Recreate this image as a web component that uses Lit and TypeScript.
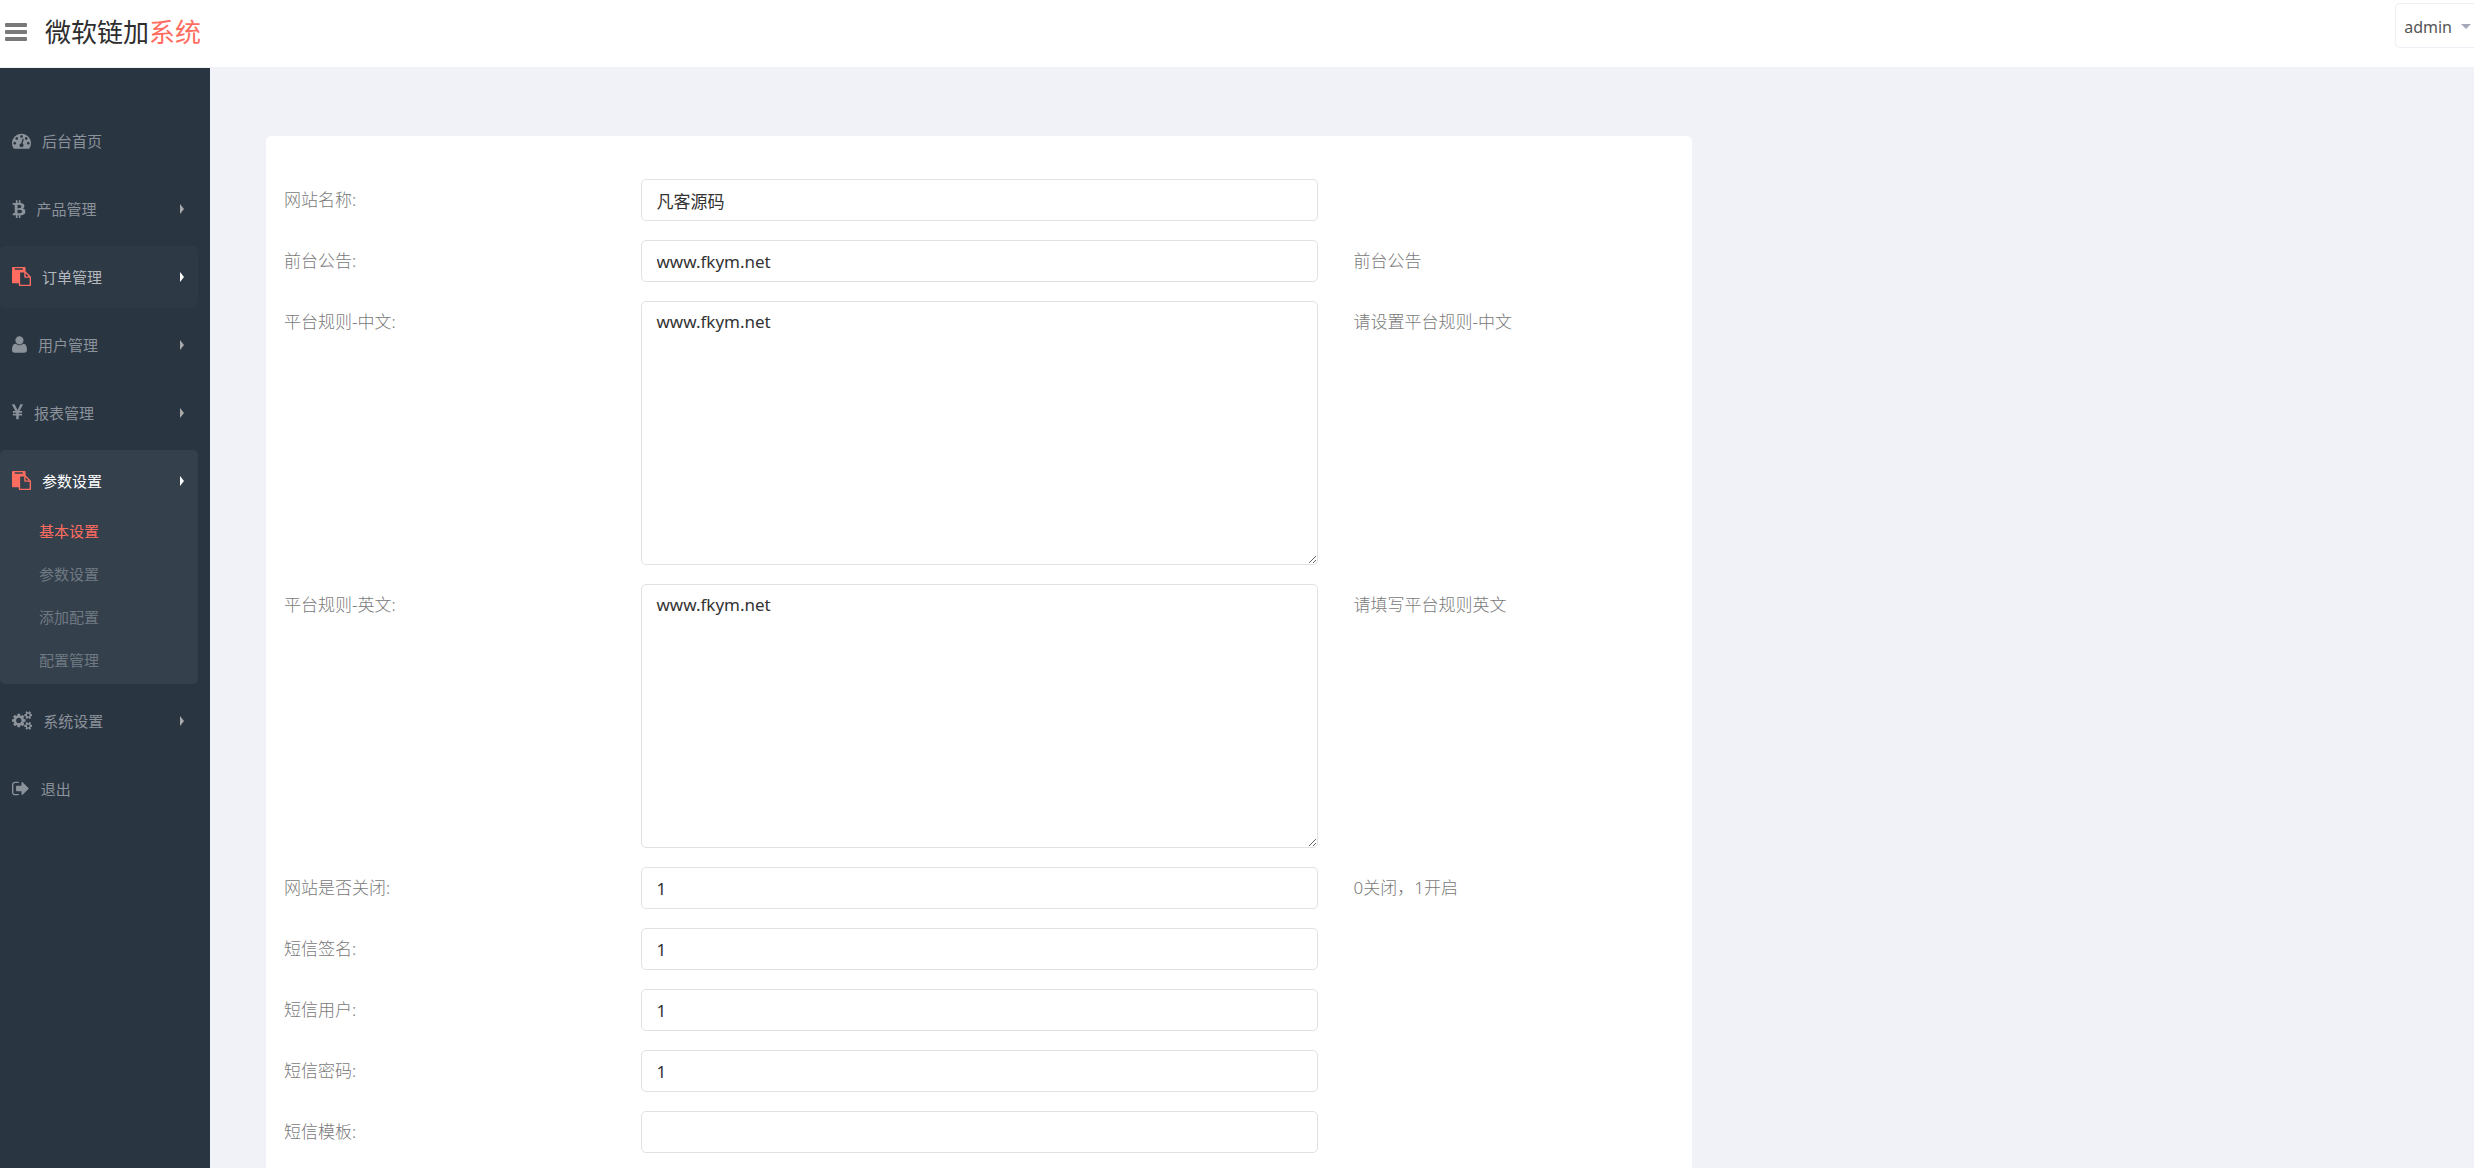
import { LitElement, html, css, svg, nothing } from "lit";
import { customElement } from "lit/decorators.js";
import { classMap } from "lit/directives/class-map.js";

interface Glyph {
  width: number;
  path: string;
}

interface MenuItem {
  label: string;
  icon: string;
  arrow?: boolean;
  state?: "hover" | "active";
  children?: { label: string; current?: boolean }[];
}

interface Field {
  id: string;
  label: string;
  value: string;
  hint?: string;
  multiline?: boolean;
}

/* Glyph outlines on a 1792-unit em, y axis pointing up, baseline at 1536. */
const GLYPHS: Record<string, Glyph> = {
  dashboard: {
    width: 1792,
    path: "M384 384q0 53 -37.5 90.5t-90.5 37.5t-90.5 -37.5t-37.5 -90.5t37.5 -90.5t90.5 -37.5t90.5 37.5t37.5 90.5zM576 832q0 53 -37.5 90.5t-90.5 37.5t-90.5 -37.5t-37.5 -90.5t37.5 -90.5t90.5 -37.5t90.5 37.5t37.5 90.5zM1004 351l101 382q6 26 -7.5 48.5t-38.5 29.5t-48 -6.5t-30 -39.5l-101 -382q-60 -5 -107 -43.5t-63 -98.5q-20 -77 20 -146t117 -89t146 20t89 117q16 60 -6 117t-72 91zM1664 384q0 53 -37.5 90.5t-90.5 37.5t-90.5 -37.5t-37.5 -90.5t37.5 -90.5t90.5 -37.5t90.5 37.5t37.5 90.5zM1024 1024q0 53 -37.5 90.5t-90.5 37.5t-90.5 -37.5t-37.5 -90.5t37.5 -90.5t90.5 -37.5t90.5 37.5t37.5 90.5zM1472 832q0 53 -37.5 90.5t-90.5 37.5t-90.5 -37.5t-37.5 -90.5t37.5 -90.5t90.5 -37.5t90.5 37.5t37.5 90.5zM1792 384q0 -261 -141 -483q-19 -29 -54 -29h-1402q-35 0 -54 29q-141 221 -141 483q0 182 71 348t191 286t286 191t348 71t348 -71t286 -191t191 -286t71 -348z",
  },
  bitcoin: {
    width: 1280,
    path: "M1167 896q18 -182 -131 -258q117 -28 175 -103t45 -214q-7 -71 -32.5 -125t-64.5 -89t-97 -58.5t-121.5 -34.5t-145.5 -15v-255h-154v251q-80 0 -122 1v-252h-154v255q-18 0 -54 0.5t-55 0.5h-200l31 183h111q50 0 58 51v402h16q-6 1 -16 1v287q-13 68 -89 68h-111v164l212 -1q64 0 97 1v252h154v-247q82 2 122 2v245h154v-252q79 -7 140 -22.5t113 -45t82.5 -78t36.5 -114.5zM952 351q0 36 -15 64t-37 46t-57.5 30.5t-65.5 18.5t-74 9t-69 3t-64.5 -1t-47.5 -1v-338q8 0 37 -0.5t48 -0.5t53 1.5t58.5 4t57 8.5t55.5 14t47.5 21t39.5 30t24.5 40t9.5 51zM881 827q0 33 -12.5 58.5t-30.5 42t-48 28t-55 16.5t-61.5 8t-58 2.5t-54 -1t-39.5 -0.5v-307q5 0 34.5 -0.5t46.5 0t50 2t55 5.5t51.5 11t48.5 18.5t37 27t27 38.5t9 51z",
  },
  paste: {
    width: 1792,
    path: "M768 -128h896v640h-416q-40 0 -68 28t-28 68v416h-384v-1152zM1024 1312v64q0 13 -9.5 22.5t-22.5 9.5h-704q-13 0 -22.5 -9.5t-9.5 -22.5v-64q0 -13 9.5 -22.5t22.5 -9.5h704q13 0 22.5 9.5t9.5 22.5zM1280 640h299l-299 299v-299zM1792 512v-672q0 -40 -28 -68t-68 -28h-960q-40 0 -68 28t-28 68v160h-544q-40 0 -68 28t-28 68v1344q0 40 28 68t68 28h1088q40 0 68 -28t28 -68v-328q21 -13 36 -28l408 -408q28 -28 48 -76t20 -88z",
  },
  user: {
    width: 1408,
    path: "M1408 131q0 -120 -73 -189.5t-194 -69.5h-874q-121 0 -194 69.5t-73 189.5q0 53 3.5 103.5t14 109t26.5 108.5t43 97.5t62 81t85.5 53.5t111.5 20q9 0 42 -21.5t74.5 -48t108 -48t133.5 -21.5t133.5 21.5t108 48t74.5 48t42 21.5q61 0 111.5 -20t85.5 -53.5t62 -81t43 -97.5t26.5 -108.5t14 -109t3.5 -103.5zM1088 1024q0 -159 -112.5 -271.5t-271.5 -112.5t-271.5 112.5t-112.5 271.5t112.5 271.5t271.5 112.5t271.5 -112.5t112.5 -271.5z",
  },
  yen: {
    width: 1027,
    path: "M603 0h-172q-13 0 -22.5 9t-9.5 23v330h-288q-13 0 -22.5 9t-9.5 23v103q0 13 9.5 22.5t22.5 9.5h288v85h-288q-13 0 -22.5 9t-9.5 23v104q0 13 9.5 22.5t22.5 9.5h214l-321 578q-8 16 0 32q10 16 28 16h194q19 0 29 -18l215 -425q19 -38 56 -125q10 24 30.5 68t27.5 61l191 420q8 19 29 19h191q17 0 27 -16q9 -14 1 -31l-313 -579h215q13 0 22.5 -9.5t9.5 -22.5v-104q0 -14 -9.5 -23t-22.5 -9h-290v-85h290q13 0 22.5 -9.5t9.5 -22.5v-103q0 -14 -9.5 -23t-22.5 -9h-290v-330q0 -13 -9.5 -22.5t-22.5 -9.5z",
  },
  cogs: {
    width: 1920,
    path: "M896 640q0 106 -75 181t-181 75t-181 -75t-75 -181t75 -181t181 -75t181 75t75 181zM1664 128q0 52 -38 90t-90 38t-90 -38t-38 -90q0 -53 37.5 -90.5t90.5 -37.5t90.5 37.5t37.5 90.5zM1664 1152q0 52 -38 90t-90 38t-90 -38t-38 -90q0 -53 37.5 -90.5t90.5 -37.5t90.5 37.5t37.5 90.5zM1280 731v-185q0 -10 -7 -19.5t-16 -10.5l-155 -24q-11 -35 -32 -76q34 -48 90 -115q7 -11 7 -20q0 -12 -7 -19q-23 -30 -82.5 -89.5t-78.5 -59.5q-11 0 -21 7l-115 90q-37 -19 -77 -31q-11 -108 -23 -155q-7 -24 -30 -24h-186q-11 0 -20 7.5t-10 17.5l-23 153q-34 10 -75 31l-118 -89q-7 -7 -20 -7q-11 0 -21 8q-144 133 -144 160q0 9 7 19q10 14 41 53t47 61q-23 44 -35 82l-152 24q-10 1 -17 9.5t-7 19.5v185q0 10 7 19.5t16 10.5l155 24q11 35 32 76q-34 48 -90 115q-7 11 -7 20q0 12 7 20q22 30 82 89t79 59q11 0 21 -7l115 -90q34 18 77 32q11 108 23 154q7 24 30 24h186q11 0 20 -7.5t10 -17.5l23 -153q34 -10 75 -31l118 89q8 7 20 7q11 0 21 -8q144 -133 144 -160q0 -8 -7 -19q-12 -16 -42 -54t-45 -60q23 -48 34 -82l152 -23q10 -2 17 -10.5t7 -19.5zM1920 198v-140q0 -16 -149 -31q-12 -27 -30 -52q51 -113 51 -138q0 -4 -4 -7q-122 -71 -124 -71q-8 0 -46 47t-52 68q-20 -2 -30 -2t-30 2q-14 -21 -52 -68t-46 -47q-2 0 -124 71q-4 3 -4 7q0 25 51 138q-18 25 -30 52q-149 15 -149 31v140q0 16 149 31q13 29 30 52q-51 113 -51 138q0 4 4 7q4 2 35 20t59 34t30 16q8 0 46 -46.5t52 -67.5q20 2 30 2t30 -2q51 71 92 112l6 2q4 0 124 -70q4 -3 4 -7q0 -25 -51 -138q17 -23 30 -52q149 -15 149 -31zM1920 1222v-140q0 -16 -149 -31q-12 -27 -30 -52q51 -113 51 -138q0 -4 -4 -7q-122 -71 -124 -71q-8 0 -46 47t-52 68q-20 -2 -30 -2t-30 2q-14 -21 -52 -68t-46 -47q-2 0 -124 71q-4 3 -4 7q0 25 51 138q-18 25 -30 52q-149 15 -149 31v140q0 16 149 31q13 29 30 52q-51 113 -51 138q0 4 4 7q4 2 35 20t59 34t30 16q8 0 46 -46.5t52 -67.5q20 2 30 2t30 -2q51 71 92 112l6 2q4 0 124 -70q4 -3 4 -7q0 -25 -51 -138q17 -23 30 -52q149 -15 149 -31z",
  },
  signout: {
    width: 1664,
    path: "M640 96q0 -4 1 -20t0.5 -26.5t-3 -23.5t-10 -19.5t-20.5 -6.5h-320q-119 0 -203.5 84.5t-84.5 203.5v704q0 119 84.5 203.5t203.5 84.5h320q13 0 22.5 -9.5t9.5 -22.5q0 -4 1 -20t0.5 -26.5t-3 -23.5t-10 -19.5t-20.5 -6.5h-320q-66 0 -113 -47t-47 -113v-704q0 -66 47 -113t113 -47h288h11h13t11.5 -1t11.5 -3t8 -5.5t7 -9t2 -13.5zM1568 640q0 -26 -19 -45l-544 -544q-19 -19 -45 -19t-45 19t-19 45v288h-448q-26 0 -45 19t-19 45v384q0 26 19 45t45 19h448v288q0 26 19 45t45 19t45 -19l544 -544q19 -19 19 -45z",
  },
};

const MENU: MenuItem[] = [
  { label: "后台首页", icon: "dashboard" },
  { label: "产品管理", icon: "bitcoin", arrow: true },
  { label: "订单管理", icon: "paste", arrow: true, state: "hover" },
  { label: "用户管理", icon: "user", arrow: true },
  { label: "报表管理", icon: "yen", arrow: true },
  {
    label: "参数设置",
    icon: "paste",
    arrow: true,
    state: "active",
    children: [
      { label: "基本设置", current: true },
      { label: "参数设置" },
      { label: "添加配置" },
      { label: "配置管理" },
    ],
  },
  { label: "系统设置", icon: "cogs", arrow: true },
  { label: "退出", icon: "signout" },
];

const FIELDS: Field[] = [
  { id: "site-name", label: "网站名称:", value: "凡客源码" },
  { id: "notice", label: "前台公告:", value: "www.fkym.net", hint: "前台公告" },
  { id: "rules-zh", label: "平台规则-中文:", value: "www.fkym.net", hint: "请设置平台规则-中文", multiline: true },
  { id: "rules-en", label: "平台规则-英文:", value: "www.fkym.net", hint: "请填写平台规则英文", multiline: true },
  { id: "closed", label: "网站是否关闭:", value: "1", hint: "0关闭，1开启" },
  { id: "sms-sign", label: "短信签名:", value: "1" },
  { id: "sms-user", label: "短信用户:", value: "1" },
  { id: "sms-pass", label: "短信密码:", value: "1" },
  { id: "sms-template", label: "短信模板:", value: "" },
];

@customElement("side-menu")
export class SideMenu extends LitElement {
  static styles = css`
    :host {
      display: block;
      background: #2a3542;
      padding: 42px 12px 0 0;
      font-size: 15px;
      line-height: 20px;
    }
    ul {
      list-style: none;
      margin: 0;
      padding: 0;
    }
    .menu {
      display: grid;
      gap: 6px;
    }
    .entry {
      border-radius: 5px;
      color: #8b929a;
    }
    .hover {
      background: #2d3945;
      color: #b4b8bd;
    }
    .active {
      background: #35404d;
      color: #fff;
    }
    a {
      color: inherit;
      text-decoration: none;
    }
    .row {
      display: flex;
      align-items: center;
      gap: 11px;
      padding: 21px 14px 21px 12px;
    }
    .icon {
      flex: none;
      height: 19px;
      margin-bottom: 1px;
      fill: currentColor;
    }
    .hover .icon,
    .active .icon {
      fill: #ff6c60;
    }
    .name {
      flex: 1;
    }
    .arrow {
      border: 5px solid transparent;
      border-left: 4px solid #a9a9a9;
      border-right: 0;
    }
    .hover .arrow,
    .active .arrow {
      border-left-color: #fff;
    }
    .sub {
      margin-top: -2px;
      padding-bottom: 2px;
    }
    .sub a {
      display: block;
      padding: 11px 0 12px 39px;
      color: #6f7982;
    }
    .sub .current {
      color: #ff6c60;
    }
  `;

  private icon(name: string) {
    const g = GLYPHS[name];
    return html`<svg class="icon" viewBox="0 0 ${g.width} 1792" aria-hidden="true">
      ${svg`<path transform="translate(0 1536) scale(1 -1)" d=${g.path}></path>`}
    </svg>`;
  }

  render() {
    return html`<nav>
      <ul class="menu">
        ${MENU.map(
          (item) => html`<li
            class=${classMap({ entry: true, hover: item.state === "hover", active: item.state === "active" })}
          >
            <a class="row" href="#">
              ${this.icon(item.icon)}
              <span class="name">${item.label}</span>
              ${item.arrow ? html`<span class="arrow"></span>` : nothing}
            </a>
            ${item.children
              ? html`<ul class="sub">
                  ${item.children.map(
                    (c) => html`<li><a href="#" class=${classMap({ current: !!c.current })}>${c.label}</a></li>`
                  )}
                </ul>`
              : nothing}
          </li>`
        )}
      </ul>
    </nav>`;
  }
}

@customElement("settings-form")
export class SettingsForm extends LitElement {
  static styles = css`
    :host {
      display: block;
      background: #fff;
      border-radius: 5px 5px 0 0;
      padding: 43px 0 15px;
    }
    form {
      display: grid;
      gap: 19px;
    }
    .field {
      display: grid;
      grid-template-columns: 1fr 2fr 1fr;
      align-items: start;
    }
    .label,
    .hint {
      padding: 8px 18px 0;
      line-height: 25px;
      font-weight: 300;
      color: #797979;
    }
    .cell {
      display: grid;
      padding: 0 18px;
    }
    .control {
      box-sizing: border-box;
      width: 100%;
      height: 42px;
      margin: 0;
      padding: 8px 15px;
      border: 1px solid #e2e2e4;
      border-radius: 5px;
      background: #fff;
      font: inherit;
      line-height: 24px;
      color: #333;
      outline: none;
    }
    .area {
      height: 264px;
      resize: both;
    }
  `;

  render() {
    return html`<form>
      ${FIELDS.map(
        (f) => html`<div class="field">
          <label class="label" for=${f.id}>${f.label}</label>
          <div class="cell">
            ${f.multiline
              ? html`<textarea class="control area" id=${f.id} .value=${f.value}></textarea>`
              : html`<input class="control" type="text" id=${f.id} .value=${f.value} />`}
          </div>
          ${f.hint ? html`<span class="hint">${f.hint}</span>` : nothing}
        </div>`
      )}
    </form>`;
  }
}

@customElement("app-root")
export class AppRoot extends LitElement {
  static styles = css`
    :host {
      display: flex;
      flex-direction: column;
      min-height: 100vh;
      background: #f1f2f7;
      font-family: "Noto Sans", "Noto Sans CJK SC", sans-serif;
      font-size: 17px;
    }
    .header {
      display: flex;
      align-items: flex-start;
      justify-content: space-between;
      height: 67px;
      background: #fff;
      border-bottom: 1px solid #f1f2f7;
    }
    .brand {
      display: flex;
      align-items: center;
      gap: 18px;
      padding: 14px 0 0 5px;
    }
    .toggle {
      display: grid;
      gap: 3px;
      width: 22px;
      margin: 0;
      padding: 0;
      border: 0;
      background: none;
    }
    .bar {
      height: 4px;
      border-radius: 1px;
      background: #797979;
    }
    .logo {
      font-size: 26px;
      line-height: 36px;
      color: #2e2e2e;
      text-decoration: none;
    }
    .accent {
      color: #ff6c60;
    }
    .account {
      display: flex;
      align-items: center;
      gap: 9px;
      height: 45px;
      margin-top: 3px;
      padding: 2px 3px 0 8px;
      border: 1px solid #eeeef5;
      border-right: 0;
      border-radius: 5px 0 0 5px;
      background: #fff;
      font: inherit;
      font-size: 16px;
      color: #555;
    }
    .caret {
      border: 5px solid transparent;
      border-top-color: #a4aabc;
      border-bottom: 0;
    }
    .body {
      flex: 1;
      display: grid;
      grid-template-columns: 210px 1fr;
    }
    .main {
      display: grid;
      grid-template-columns: 2fr 1fr;
      gap: 37px;
      padding: 68px 32px 0 56px;
    }
  `;

  render() {
    return html`
      <header class="header">
        <div class="brand">
          <button class="toggle" type="button" aria-label="菜单">
            <span class="bar"></span><span class="bar"></span><span class="bar"></span>
          </button>
          <a class="logo" href="#">微软链加<span class="accent">系统</span></a>
        </div>
        <button class="account" type="button">admin<span class="caret"></span></button>
      </header>
      <div class="body">
        <side-menu></side-menu>
        <main class="main"><settings-form></settings-form></main>
      </div>
    `;
  }
}
